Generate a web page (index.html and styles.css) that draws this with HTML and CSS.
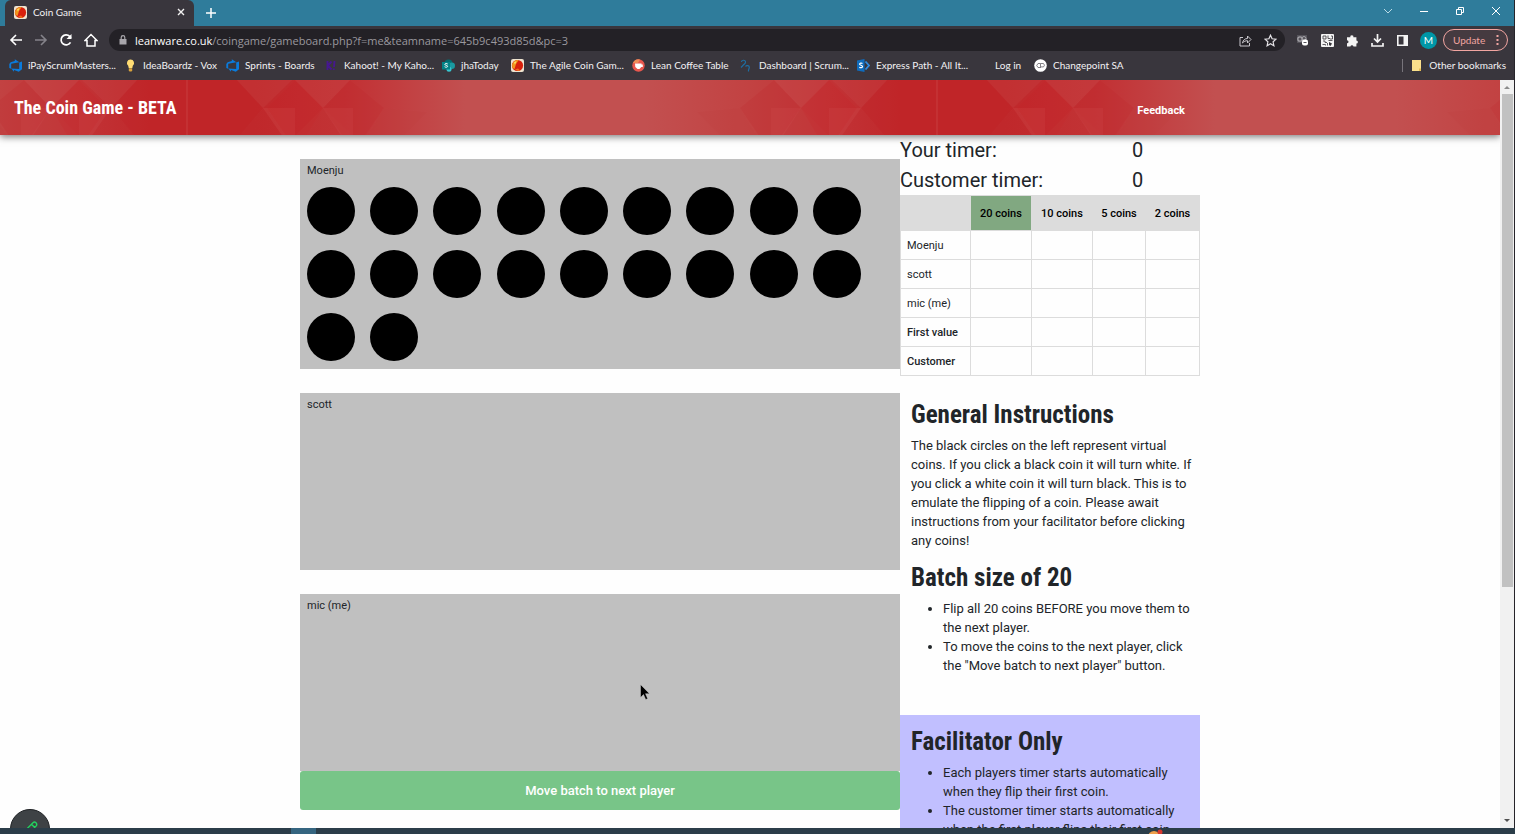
FILE: index.html
```html
<!DOCTYPE html>
<html lang="en">
<head>
<meta charset="utf-8">
<title>Coin Game</title>
<link rel="stylesheet" href="styles.css">
</head>
<body>
<svg class="defs" aria-hidden="true">
  <symbol id="coin-logo" viewBox="0 0 13 13"><rect width="13" height="13" rx="2" fill="#eee3cf"/><circle cx="6.500" cy="6.500" r="5.600" fill="#d8200c"/><path d="M1.500 9A5.600 5.600 0 0 1 7.500 1.200L5 5 3.500 10z" fill="#f0951c"/><path d="M3 3.500L5.500 2 4 5.500z" fill="#ffe36b"/><path d="M4 10.500L7 12H9.500L7 9.500z" fill="#f06a1c"/></symbol>
  <symbol id="devops" viewBox="0 0 13 13"><path d="M13 2.600v7.600L9.800 12.700 5 11v1.800L2.200 9.500l8 .6V3.400zM10.300 3.200L5.800.3v1.800L1.600 3.300.3 5v3.900l1.900.8V4.800z" fill="#0a7bdc"/></symbol>
</svg>

<header class="browser">
  <div class="tabstrip">
    <div class="tab">
      <svg class="i13"><use href="#coin-logo"/></svg>
      <span class="tab-title">Coin Game</span>
      <button class="icon" aria-label="Close tab"><svg width="8" height="8" viewBox="0 0 8 8"><path d="M1 1l6 6M7 1L1 7" stroke="#f2f2f2" stroke-width="1.400"/></svg></button>
    </div>
    <button class="icon new-tab" aria-label="New tab"><svg width="10" height="10" viewBox="0 0 10 10"><path d="M5 0v10M0 5h10" stroke="#fff" stroke-width="1.500"/></svg></button>
    <div class="window-buttons">
      <button class="icon" aria-label="Search tabs"><svg width="10" height="10" viewBox="0 0 10 10"><path d="M1 3l4 4 4-4" fill="none" stroke="#b9dbe6"/></svg></button>
      <button class="icon" aria-label="Minimize"><svg width="10" height="10" viewBox="0 0 10 10"><path d="M1 5.500h8" stroke="#fff"/></svg></button>
      <button class="icon" aria-label="Restore"><svg width="10" height="10" viewBox="0 0 10 10"><path d="M1.500 3.500h5v5h-5zM3.500 3V1.500h5v5H7" fill="none" stroke="#fff"/></svg></button>
      <button class="icon" aria-label="Close"><svg width="10" height="10" viewBox="0 0 10 10"><path d="M1 1l8 8M9 1L1 9" stroke="#fff"/></svg></button>
    </div>
  </div>

  <div class="toolbar">
    <button class="icon" aria-label="Back"><svg width="14" height="14" viewBox="0 0 14 14"><path d="M13 7H2.500M7 2L2 7l5 5" fill="none" stroke="#fff" stroke-width="1.600"/></svg></button>
    <button class="icon" aria-label="Forward"><svg width="14" height="14" viewBox="0 0 14 14"><path d="M1 7h10.500M7 2l5 5-5 5" fill="none" stroke="#85838a" stroke-width="1.600"/></svg></button>
    <button class="icon" aria-label="Reload"><svg width="14" height="14" viewBox="0 0 14 14"><path d="M11.500 9.300A5 5 0 1 1 10.700 3.400L12 4.800" fill="none" stroke="#fff" stroke-width="1.700"/><path d="M12.500 1v5h-5z" fill="#fff"/></svg></button>
    <button class="icon" aria-label="Home"><svg width="14" height="14" viewBox="0 0 14 14"><path d="M1 7.500L7 1.500l6 6H11V13H3V7.500z" fill="none" stroke="#fff" stroke-width="1.500"/></svg></button>
    <div class="omnibox">
      <svg width="8" height="10" viewBox="0 0 8 10"><path d="M1 4h6.500v5.500h-7V4z" fill="#a8a6ab"/><path d="M2.200 4V2.500a1.800 1.800 0 0 1 3.600 0V4" fill="none" stroke="#a8a6ab" stroke-width="1.200"/></svg>
      <span class="url"><b>leanware.co.uk</b>/coingame/gameboard.php?f=me&amp;teamname=645b9c493d85d&amp;pc=3</span>
      <button class="icon" aria-label="Share"><svg width="13" height="13" viewBox="0 0 13 13"><path d="M4 3.500H1V12h9.500V9M3.500 9c.5-3 2.500-4.500 5-4.500V2L12 5.500 8.500 9V6.700C6.500 6.700 5 7.300 3.500 9z" fill="none" stroke="#c9c7cc"/></svg></button>
      <button class="icon" aria-label="Bookmark"><svg width="13" height="13" viewBox="0 0 13 13"><path d="M6.500 1.200l1.600 3.600 3.900.4-2.900 2.600.8 3.900-3.400-2-3.400 2 .8-3.900L1 5.200l3.900-.4z" fill="none" stroke="#e4e2e6" stroke-width="1.200"/></svg></button>
    </div>
    <div class="extensions">
      <button class="icon" aria-label="Extension"><svg width="13" height="13" viewBox="0 0 13 13"><path d="M1 1h10v8H1z" fill="#55535a"/><circle cx="4" cy="5" r="2.200" fill="none" stroke="#a5a3a8" stroke-width="1.300"/><circle cx="8" cy="4.500" r="2" fill="none" stroke="#a5a3a8"/><rect x="6" y="5.500" width="6" height="6" rx="2" fill="#fff"/><path d="M7.500 8.500h3" stroke="#55535a"/></svg></button>
      <button class="icon" aria-label="QR code"><svg width="13" height="13" viewBox="0 0 13 13"><rect width="13" height="13" rx="1" fill="#f4f4f4"/><path d="M2 2h3v3H2zM7 1.500v3h2M10 2h1.500v3H9M2 7h2v1.500h2M1.500 10.500h3v1M7.500 6.500h4M6.500 9v2.500" fill="none" stroke="#37353b" stroke-width=".8"/><path d="M8 8l3 1.500L9.500 12 8 11z" fill="#37353b"/></svg></button>
      <button class="icon" aria-label="Extensions"><svg width="13" height="13" viewBox="0 0 13 13"><path d="M1 3.300h3.300a1.600 1.600 0 1 1 3.100 0h3v3.100a1.500 1.500 0 1 1 0 3v3H7.500a1.600 1.600 0 0 0-3.100 0H1V9.300a1.500 1.500 0 0 0 0-3z" fill="#f4f4f4"/></svg></button>
      <button class="icon" aria-label="Downloads"><svg width="13" height="13" viewBox="0 0 13 13"><path d="M6.500 0v7.500M3 4.500L6.500 8 10 4.500M1 9v3h11V9" fill="none" stroke="#f4f4f4" stroke-width="1.700"/></svg></button>
      <button class="icon" aria-label="Side panel"><svg width="13" height="13" viewBox="0 0 13 13"><path d="M1.800 1.800h9.400v9.400H1.800z" fill="none" stroke="#f4f4f4" stroke-width="1.600"/><path d="M7.500 2v9H11V2z" fill="#f4f4f4"/></svg></button>
    </div>
    <button class="avatar" aria-label="Profile">M</button>
    <button class="update">Update <svg width="3" height="12" viewBox="0 0 3 12"><path d="M1.500 1v2m0 2v2m0 2v2" stroke="#f2a5a1" stroke-width="2"/></svg></button>
  </div>

  <nav class="bookmarks">
    <a href="#"><svg class="i13"><use href="#devops"/></svg>iPayScrumMasters...</a>
    <a href="#"><svg class="i13" viewBox="0 0 13 13"><path d="M6.500.5a3.500 3.500 0 0 1 2.300 6.200L8.300 9H4.700l-.5-2.300A3.500 3.500 0 0 1 6.500.5z" fill="#ffdc73"/><path d="M4.800 9.300h3.400v2.200L7.500 12.500h-2l-.7-1z" fill="#d9a23b"/></svg>IdeaBoardz - Vox</a>
    <a href="#"><svg class="i13"><use href="#devops"/></svg>Sprints - Boards</a>
    <a href="#"><svg class="i13" viewBox="0 0 13 13"><path d="M2.500 2v9M6.500 2.500L3 6.500l3.500 4M9.500 2l-.5 6M8.800 9.500v1.500" fill="none" stroke="#46178f" stroke-width="1.900"/></svg>Kahoot! - My Kaho...</a>
    <a href="#"><svg class="i13" viewBox="0 0 13 13"><circle cx="6.500" cy="4.500" r="4" fill="#036c70"/><circle cx="9.800" cy="6.800" r="3.200" fill="#1a9ba1"/><circle cx="7" cy="10.300" r="2.500" fill="#37c6d0"/><rect y="3" width="8" height="7.500" fill="#038387"/><path d="M5.700 5c-1-.8-3-.6-2.800.5.200 1.200 2.700.6 2.700 1.800 0 1.100-2 1.200-3 .4" fill="none" stroke="#fff"/></svg>jhaToday</a>
    <a href="#"><svg class="i13"><use href="#coin-logo"/></svg>The Agile Coin Gam...</a>
    <a href="#"><svg class="i13" viewBox="0 0 13 13"><circle cx="6.500" cy="6.500" r="6.200" fill="#e9574e"/><path d="M1 4a6 6 0 0 1 7-3.600L6 4z" fill="#ee8b57"/><path d="M3 4.500h6.500v1h1.300v2.500H9.300L7.500 10h-2L3.300 8z" fill="#fff"/></svg>Lean Coffee Table</a>
    <a href="#"><svg class="i13" viewBox="0 0 13 13"><path d="M1.500 3c0-2 3.500-2.500 4-.3C6 5 3.500 5 3 6.500L1 8.500M5.500 7.500c1-1.500 3.500-1 3.800.5.200 1.500-1.200 2.500-.8 4.500" fill="none" stroke="#1d6fa3" stroke-width="1.200"/></svg>Dashboard | Scrum...</a>
    <a href="#"><svg class="i13" viewBox="0 0 13 13"><path d="M0 1.500L7.500 0v13L0 11.500z" fill="#0f6cbd"/><path d="M8.500 2.500L12 6.500 8.500 10.500" fill="none" stroke="#2f8be0" stroke-width="1.800"/><path d="M5.500 4.500C4.500 3.700 2.500 4 2.600 5.300c.1 1.200 2.900.8 2.900 2.300 0 1.300-2 1.400-3.200.6" fill="none" stroke="#fff" stroke-width="1.200"/></svg>Express Path - All It...</a>
    <a href="#"><span class="i13"></span>Log in</a>
    <a href="#"><svg class="i13" viewBox="0 0 13 13"><circle cx="6.500" cy="6.500" r="6.300" fill="#fff"/><path d="M6.500 4.500H4L2.700 6.500 4 8.500h2M6.500 9V4.500h3l1 1.700-1 1.700h-3" fill="none" stroke="#77757b" stroke-width=".9"/></svg>Changepoint SA</a>
    <a href="#" class="other"><svg class="i13" viewBox="0 0 13 13"><path d="M2 1h9v11H2z" fill="#fbe08c"/><path d="M9 9.500h2V12H9z" fill="#e5bc54"/></svg>Other bookmarks</a>
  </nav>
</header>

<div class="viewport">
  <div class="page">
    <header class="site-header">
      <svg class="backdrop" aria-hidden="true">
        <defs>
          <linearGradient id="reds"><stop offset="0" stop-color="#c24242"/><stop offset=".1" stop-color="#c23437"/><stop offset=".2" stop-color="#c0282b"/><stop offset=".34" stop-color="#c0282b"/><stop offset=".46" stop-color="#c23033"/><stop offset=".53" stop-color="#c23e40"/><stop offset=".62" stop-color="#c25050"/><stop offset=".86" stop-color="#c25050"/><stop offset="1" stop-color="#c24242"/></linearGradient>
          <g id="half">
            <path d="M0 0h50l26 28-24 28H0z" fill="#bd1b20" fill-opacity=".2"/>
            <path d="M50 0h55L76 28z" fill="#c95050" fill-opacity=".2"/>
            <path d="M76 28h32v46zM136 28h30v46z" fill="#cf5757" fill-opacity=".22"/>
            <path d="M108 0l28 28-26 44L80 28z" fill="#c81e24" fill-opacity=".18"/>
            <path d="M108 0h55l-27 28z" fill="#cd5a5a" fill-opacity=".2"/>
            <path d="M163 0l34 28-30 44-31-44z" fill="#c02328" fill-opacity=".2"/>
            <path d="M108 56l28-28 30 28z" fill="#c43b3d" fill-opacity=".2"/>
            <path d="M197 28l43 4-24 24h-36z" fill="#c03c3e" fill-opacity=".2"/>
          </g>
          <pattern id="facets" width="750" height="56" patternUnits="userSpaceOnUse">
            <rect width="750" height="56" fill="url(#reds)"/>
            <use href="#half" x="187"/><use href="#half" transform="translate(187 0) scale(-1 1)"/><use href="#half" transform="translate(937 0) scale(-1 1)"/>
            <path d="M187 0v56" stroke="#cc4b4c" stroke-opacity=".6"/>
          </pattern>
        </defs>
        <rect width="100%" height="100%" fill="url(#facets)"/>
      </svg>
      <h1>The Coin Game - BETA</h1>
      <a class="feedback" href="#">Feedback</a>
    </header>

    <main class="game">
      <section class="board">
        <div class="player">
          <h3>Moenju</h3>
          <div class="coins">
            <button class="coin" aria-label="Coin 1"></button><button class="coin" aria-label="Coin 2"></button><button class="coin" aria-label="Coin 3"></button><button class="coin" aria-label="Coin 4"></button><button class="coin" aria-label="Coin 5"></button><button class="coin" aria-label="Coin 6"></button><button class="coin" aria-label="Coin 7"></button><button class="coin" aria-label="Coin 8"></button><button class="coin" aria-label="Coin 9"></button><button class="coin" aria-label="Coin 10"></button>
            <button class="coin" aria-label="Coin 11"></button><button class="coin" aria-label="Coin 12"></button><button class="coin" aria-label="Coin 13"></button><button class="coin" aria-label="Coin 14"></button><button class="coin" aria-label="Coin 15"></button><button class="coin" aria-label="Coin 16"></button><button class="coin" aria-label="Coin 17"></button><button class="coin" aria-label="Coin 18"></button><button class="coin" aria-label="Coin 19"></button><button class="coin" aria-label="Coin 20"></button>
          </div>
        </div>
        <div class="player"><h3>scott</h3></div>
        <div class="own">
          <div class="player"><h3>mic (me)</h3></div>
          <button class="move">Move batch to next player</button>
        </div>
      </section>

      <aside class="side">
        <dl class="timers">
          <dt>Your timer:</dt><dd>0</dd>
          <dt>Customer timer:</dt><dd>0</dd>
        </dl>
        <table class="scores">
          <colgroup><col class="c-name"><col class="c-wide"><col class="c-wide"><col class="c-slim"><col></colgroup>
          <thead><tr><th></th><th class="current">20 coins</th><th>10 coins</th><th>5 coins</th><th>2 coins</th></tr></thead>
          <tbody>
            <tr><td>Moenju</td><td></td><td></td><td></td><td></td></tr>
            <tr><td>scott</td><td></td><td></td><td></td><td></td></tr>
            <tr><td>mic (me)</td><td></td><td></td><td></td><td></td></tr>
            <tr><td><b>First value</b></td><td></td><td></td><td></td><td></td></tr>
            <tr><td><b>Customer</b></td><td></td><td></td><td></td><td></td></tr>
          </tbody>
        </table>
        <section class="notes">
          <h2>General Instructions</h2>
          <p>The black circles on the left represent virtual coins. If you click a black coin it will turn white. If you click a white coin it will turn black. This is to emulate the flipping of a coin. Please await instructions from your facilitator before clicking any coins!</p>
          <h2>Batch size of 20</h2>
          <ul>
            <li>Flip all 20 coins BEFORE you move them to the next player.</li>
            <li>To move the coins to the next player, click the "Move batch to next player" button.</li>
          </ul>
        </section>
        <section class="notes facilitator">
          <h2>Facilitator Only</h2>
          <ul>
            <li>Each players timer starts automatically when they flip their first coin.</li>
            <li>The customer timer starts automatically when the first player flips their first coin.</li>
          </ul>
        </section>
      </aside>
    </main>
  </div>
  <div class="scrollbar"><span class="arrow"></span><span class="track"><span class="thumb"></span></span><span class="arrow down"></span></div>
  <button class="pen" aria-label="Annotate"><svg width="18" height="18" viewBox="0 0 18 18"><path d="M2 16l1.200-4.500L12 2.700c2-1.700 4.800 1 3.200 3.200L6.500 14.700zM10.500 4.300l3.200 3.200" fill="none" stroke="#22d35e" stroke-width="1.400"/></svg></button>
  <svg class="pointer" width="10" height="17" viewBox="0 0 10 17" aria-hidden="true"><path d="M.5.500v13l3-3 2.200 5 2-.8-2.200-5h4z" fill="#000" stroke="#ddd" stroke-width=".4"/></svg>
</div>

<footer class="taskbar">
  <span class="active-app"></span>
  <svg class="tray" width="18" height="6" viewBox="0 0 18 6" aria-hidden="true"><circle cx="8" cy="9" r="6" fill="#f0a04b"/><circle cx="14" cy="4" r="2.500" fill="#d8372f"/></svg>
</footer>
</body>
</html>
```
FILE: styles.css
```css
* { box-sizing: border-box; }

body {
  margin: 0;
  height: 100vh;
  display: flex;
  flex-direction: column;
  overflow: hidden;
  background: #fefefe;
  color: #212529;
  font-family: Roboto, sans-serif;
  font-size: 13px;
}

button { font: inherit; border: 0; padding: 0; cursor: pointer; }
a { color: inherit; text-decoration: none; }
h1, h2, h3, p, ul, dl, dd { margin: 0; }
svg { display: block; flex: none; }
.defs { position: absolute; width: 0; height: 0; }
.icon { background: none; display: grid; place-items: center; }
.i13 { width: 13px; height: 13px; flex: none; }

/* Browser window */
.browser {
  background: #39363d;
  color: #f3f2f4;
  font-family: Lato, "Open Sans", sans-serif;
  font-size: 10px;
  border-right: 1px solid #26242a;
}

.tabstrip { height: 26px; background: #2f7c9b; display: flex; align-items: center; padding-left: 5px; }
.tab {
  width: 189px;
  height: 26px;
  background: #39363d;
  border-radius: 6px 6px 0 0;
  display: flex;
  align-items: center;
  gap: 6px;
  padding: 0 9px 2px;
}
.tab-title { flex: 1; }
.new-tab { margin-left: 12px; }
.window-buttons { margin-left: auto; display: flex; gap: 26px; padding-right: 13px; padding-bottom: 5px; }

.toolbar { height: 28px; display: flex; align-items: center; gap: 11px; padding: 0 6px 0 9px; }
.omnibox {
  flex: 1;
  height: 22px;
  border-radius: 11px;
  background: #232126;
  display: flex;
  align-items: center;
  gap: 12px;
  padding: 0 8px 0 10px;
  font-family: "Open Sans", sans-serif;
  font-size: 11px;
}
.url { flex: 1; color: #9a989e; margin-left: -4px; white-space: nowrap; }
.url b { font-weight: 400; color: #fff; }
.extensions { display: flex; gap: 12px; }
.avatar { width: 17px; height: 17px; border-radius: 50%; background: #0097a7; color: #fff; }
.update {
  height: 22px;
  width: 65px;
  margin-left: -5px;
  border: 1px solid #f2a5a1;
  border-radius: 11px;
  background: #453a40;
  color: #f2a5a1;
  display: flex;
  align-items: center;
  justify-content: space-between;
  padding: 0 8px 0 9px;
}

.bookmarks {
  height: 26px;
  display: grid;
  grid-template-columns: 115px 102px 99px 117px 69px 121px 108px 117px 119px 58px 110px 1fr;
  align-items: center;
  padding: 0 8px 4px 9px;
  white-space: nowrap;
}
.bookmarks a { display: flex; align-items: center; gap: 6px; }
.bookmarks .other { justify-self: end; border-left: 1px solid #77747b; padding-left: 7px; }

/* Page viewport */
.viewport { flex: 1; min-height: 0; display: flex; position: relative; border-right: 1px solid #26242a; }
.page { flex: 1; overflow: hidden; }

.site-header {
  position: relative;
  height: 55px;
  display: flex;
  align-items: center;
  color: #fff;
  padding: 0 315px 0 14px;
  box-shadow: 0 2px 7px rgba(0, 0, 0, .5);
}
.backdrop { position: absolute; inset: 0; width: 100%; height: 100%; z-index: -1; }
.site-header h1 { flex: 1; font: 700 18px/24px "Roboto Condensed", "Liberation Sans Narrow", sans-serif; }
.feedback { font-weight: 700; font-size: 11px; padding-top: 6px; }

.game { width: 100%; max-width: 900px; margin: 0 auto; display: grid; grid-template-columns: minmax(0, 2fr) minmax(0, 1fr); }

.board { display: flex; flex-direction: column; gap: 24px; padding-top: 24px; }
.player { background: #c0c0c0; min-height: 177px; padding: 4px 8px 8px 7px; }
.player h3 { font-weight: 400; font-size: 11px; line-height: 16px; margin-bottom: 8px; }
.coins { display: grid; grid-template-columns: repeat(9, 1fr); row-gap: 15px; padding-right: 16px; }
.coin { width: 48px; height: 48px; border-radius: 50%; background: #000; }
.move {
  width: 100%;
  height: 39px;
  border-radius: 3px;
  background: #78c588;
  color: #fff;
  font-weight: 500;
}

.timers { display: grid; grid-template-columns: 232px 1fr; font-size: 20px; line-height: 30px; }

.scores { width: 100%; border-collapse: collapse; table-layout: fixed; font-size: 11px; }
.c-name { width: 70px; }
.c-wide { width: 61px; }
.c-slim { width: 53px; }
.scores th, .scores td { border: 1px solid #dcdcdc; padding: 0 6px; height: 29px; text-align: left; }
.scores th { height: 35px; background: #dcdcdc; color: #000; font-weight: 500; text-align: center; padding: 0; }
.scores .current { background: #81a881; }
.scores b { font-weight: 500; }

.notes { padding: 11px 6px 40px 11px; line-height: 19px; }
.scores + .notes { padding-top: 23px; }
.notes h2 { font: 700 25px/32px "Roboto Condensed", "Liberation Sans Narrow", sans-serif; margin-bottom: 5px; }
.notes p { margin-bottom: 12px; }
.notes ul { padding-left: 32px; }
.facilitator { background: #c1bfff; }

.scrollbar { width: 14px; background: #f1f1f1; display: flex; flex-direction: column; }
.arrow { height: 14px; display: grid; place-items: center; }
.arrow::before { content: ""; border: 3px solid transparent; border-top: 0; border-bottom-color: #8b8b8b; }
.down { transform: rotate(180deg); }
.down::before { border-bottom-color: #505050; }
.track { flex: 1; }
.thumb { display: block; height: 68.5%; margin: 0 1px 0 2px; background: #c1c1c1; }

.pen {
  position: absolute;
  left: 10px;
  bottom: -21px;
  width: 40px;
  height: 40px;
  border-radius: 50%;
  border: 1px solid #1e2124;
  background: #3e4245;
  display: grid;
  place-items: center;
}
.pointer { position: absolute; left: 640px; top: 604px; }

.taskbar { position: relative; height: 6px; background: #2b3d49; display: flex; justify-content: space-between; padding: 0 351px 0 291px; }
.active-app { width: 25px; background: #356580; }
```
